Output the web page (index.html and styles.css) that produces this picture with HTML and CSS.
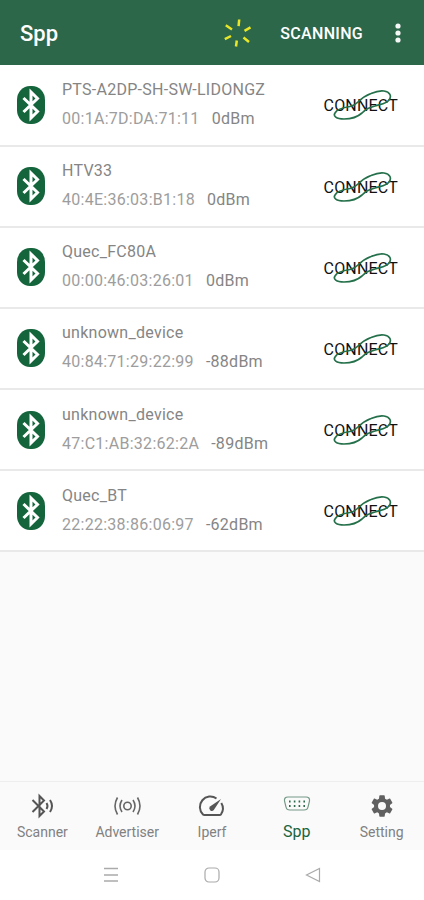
FILE: index.html
```html
<!DOCTYPE html>
<html lang="en">
<head>
<meta charset="utf-8">
<title>Spp</title>
<link rel="stylesheet" href="styles.css">
</head>
<body>
<svg class="defs" aria-hidden="true">
  <symbol id="bt" viewBox="0 0 28 38">
    <rect width="28" height="38" rx="13" ry="14" fill="#14643c"/>
    <path d="M6.500 12L20.500 25.500L14 32V6L20.500 12.500L6.500 26" fill="none" stroke="#fff" stroke-width="3"/>
  </symbol>
  <symbol id="link" viewBox="0 0 60 32">
    <path d="M25 13C30 8 34 6 38 4.500C44 2 48 1.500 51 2C57 3 59 7 56 11C53 15 48 15 42 17C35 19 33 20 29 24C24 28.500 18 30 11 30C3 30 0 27 2 24C4 20 10 18.500 17 17.500C21 17 23 15 25 13Z" fill="none" stroke="#24704a" stroke-width="1.700"/>
  </symbol>
</svg>
<div class="screen">
  <header class="bar">
    <h1 class="title">Spp</h1>
    <svg class="spinner" viewBox="0 0 28 30"><path d="M15.200 1.500L14.600 8.200M26.500 9.300L20.500 12.800M25 24L19.500 19.500M12 28.500L12.800 22.500M.8 21.200L7 18M1.800 7.300L8 11.500" stroke="#e9e628" stroke-width="2.500" fill="none"/></svg>
    <span class="scanning">SCANNING</span>
    <svg class="more" viewBox="0 0 6 20"><circle cx="3" cy="3" r="2.600"/><circle cx="3" cy="10" r="2.600"/><circle cx="3" cy="17" r="2.600"/></svg>
  </header>
  <main class="list">
    <div class="row"><svg class="badge"><use href="#bt"/></svg><div class="info"><div class="name">PTS-A2DP-SH-SW-LIDONGZ</div><div class="detail"><span class="mac">00:1A:7D:DA:71:11</span><span class="rssi">0dBm</span></div></div><div class="connect">CONNECT<svg class="link"><use href="#link"/></svg></div></div>
    <div class="row"><svg class="badge"><use href="#bt"/></svg><div class="info"><div class="name">HTV33</div><div class="detail"><span class="mac">40:4E:36:03:B1:18</span><span class="rssi">0dBm</span></div></div><div class="connect">CONNECT<svg class="link"><use href="#link"/></svg></div></div>
    <div class="row"><svg class="badge"><use href="#bt"/></svg><div class="info"><div class="name">Quec_FC80A</div><div class="detail"><span class="mac">00:00:46:03:26:01</span><span class="rssi">0dBm</span></div></div><div class="connect">CONNECT<svg class="link"><use href="#link"/></svg></div></div>
    <div class="row"><svg class="badge"><use href="#bt"/></svg><div class="info"><div class="name">unknown_device</div><div class="detail"><span class="mac">40:84:71:29:22:99</span><span class="rssi">-88dBm</span></div></div><div class="connect">CONNECT<svg class="link"><use href="#link"/></svg></div></div>
    <div class="row"><svg class="badge"><use href="#bt"/></svg><div class="info"><div class="name">unknown_device</div><div class="detail"><span class="mac">47:C1:AB:32:62:2A</span><span class="rssi">-89dBm</span></div></div><div class="connect">CONNECT<svg class="link"><use href="#link"/></svg></div></div>
    <div class="row"><svg class="badge"><use href="#bt"/></svg><div class="info"><div class="name">Quec_BT</div><div class="detail"><span class="mac">22:22:38:86:06:97</span><span class="rssi">-62dBm</span></div></div><div class="connect">CONNECT<svg class="link"><use href="#link"/></svg></div></div>
  </main>
  <nav class="tabs">
    <div class="tab"><svg class="tab-icon" viewBox="0 0 28 26"><g fill="none" stroke="#555" stroke-width="2"><path d="M4.500 7L16 18.500L11.500 23V3L16 7.500L4.500 19"/><path d="M18.500 10Q20.500 13 18.500 16M22 7Q26 13 22 19"/></g></svg><span>Scanner</span></div>
    <div class="tab"><svg class="tab-icon" viewBox="0 0 28 26"><g fill="none" stroke="#666" stroke-width="1.600"><circle cx="14.500" cy="13" r="3.700"/><path d="M9 7Q5 13 9 19M20 7Q24 13 20 19M4.500 4.500Q-.5 13 4.500 21.500M24.500 4.500Q29.500 13 24.500 21.500"/></g></svg><span>Advertiser</span></div>
    <div class="tab"><svg class="tab-icon" viewBox="0 0 28 26"><path d="M18.500 5.500A10.500 10.500 0 0 0 5 21.500Q5.500 22 6.500 22H21.500Q22.500 22 23 21.300A10.500 10.500 0 0 0 23.300 10" fill="none" stroke="#555" stroke-width="2"/><path d="M23 6L15.800 17A2.500 2.500 0 0 1 12 13.500Z" fill="#555"/></svg><span>Iperf</span></div>
    <div class="tab active"><svg class="tab-icon" viewBox="0 0 28 26"><path d="M5 4H23Q27 4 26.500 8L25 14Q24.500 17 21 17H7Q3.500 17 3 14L1.500 8Q1 4 5 4Z" fill="none" stroke="#749886" stroke-width="1.200"/><path d="M6 8.500H23M6 13H23" stroke="#2e6b4e" stroke-width="1.800" stroke-dasharray="1.600 3.200"/></svg><span>Spp</span></div>
    <div class="tab"><svg class="tab-icon" viewBox="0 0 28 26"><g transform="translate(.7 -.3) scale(1.110)"><path fill="#606060" d="M19.140 12.940c.04-.3.06-.61.06-.94s-.02-.64-.07-.94l2.030-1.580c.18-.14.23-.41.12-.61l-1.920-3.320c-.12-.22-.37-.29-.59-.22l-2.390.96c-.5-.38-1.030-.7-1.620-.94l-.36-2.540c-.04-.24-.24-.41-.48-.41h-3.840c-.24 0-.43.17-.47.41l-.36 2.540c-.59.24-1.130.57-1.620.94l-2.390-.96c-.22-.08-.47 0-.59.22L2.740 8.870c-.12.21-.08.47.12.61l2.030 1.580c-.05.3-.09.63-.09.94s.02.64.07.94l-2.030 1.580c-.18.14-.23.41-.12.61l1.920 3.320c.12.22.37.29.59.22l2.390-.96c.5.38 1.030.7 1.620.94l.36 2.540c.05.24.24.41.48.41h3.840c.24 0 .44-.17.47-.41l.36-2.540c.59-.24 1.130-.56 1.620-.94l2.390.96c.22.08.47 0 .59-.22l1.920-3.320c.12-.22.07-.47-.12-.61l-2.010-1.580zM12 15.600A3.600 3.600 0 1 1 12 8.400a3.600 3.600 0 0 1 0 7.200z"/></g></svg><span>Setting</span></div>
  </nav>
  <div class="system">
    <svg viewBox="0 0 16 16"><path d="M1 1.500H15M1 8H15M1 14H15" stroke="#aaa" stroke-width="1.300"/></svg>
    <svg viewBox="0 0 16 16"><rect x="1" y="1" width="14" height="14" rx="4" fill="none" stroke="#aaa" stroke-width="1.200"/></svg>
    <svg viewBox="0 0 16 16"><path d="M14.500 1.500V14.500L1.500 8Z" fill="none" stroke="#aaa" stroke-width="1.200"/></svg>
  </div>
</div>
</body>
</html>
```
FILE: styles.css
```css
* { box-sizing: border-box; }
body { margin: 0; font-family: Roboto, sans-serif; background: #fafafa; }
.defs { position: absolute; width: 0; height: 0; }
.screen { width: 424px; height: 900px; display: flex; flex-direction: column; overflow: hidden; }
.bar { height: 65px; flex: none; background: #2d674a; color: #fff; display: flex; align-items: center; padding: 0 23px 0 20px; }
.title { margin: 2px 0 0; font-size: 22px; line-height: 26px; font-weight: 500; flex: 1; }
.spinner { width: 28px; height: 30px; margin-right: 28px; }
.scanning { font-size: 16px; font-weight: 500; letter-spacing: .3px; margin: 1px 32px 0 0; }
.more { width: 6px; height: 20px; fill: #f4f7f5; }
.list { flex: 1; padding-top: .4px; }
.row { height: 81.15px; background: #fff; border-bottom: 2px solid #e9e9e9; display: flex; align-items: center; padding: 0 26px 0 17px; }
.badge { width: 28px; height: 38px; margin-right: 17px; }
.info { flex: 1; font-size: 16px; line-height: 29px; color: #858585; letter-spacing: .27px; margin-top: -2px; }
.detail { display: flex; gap: 12px; }
.mac { color: #9d9d9d; }
.connect { position: relative; font-size: 16px; letter-spacing: .2px; color: #111; top: 1px; }
.link { position: absolute; left: 9px; top: -7px; width: 60px; height: 32px; }
.tabs { height: 69px; flex: none; border-top: 1px solid #eee; display: grid; grid-template-columns: repeat(5, 1fr); }
.tab { display: flex; flex-direction: column; align-items: center; padding-top: 11px; font-size: 14px; line-height: 20px; color: #818181; }
.tab-icon { width: 28px; height: 26px; margin-bottom: 3px; }
.active { color: #176440; font-size: 16px; }
.system { height: 50px; flex: none; background: #fff; display: flex; justify-content: center; align-items: center; gap: 85px; }
.system svg { width: 16px; height: 16px; }
```
